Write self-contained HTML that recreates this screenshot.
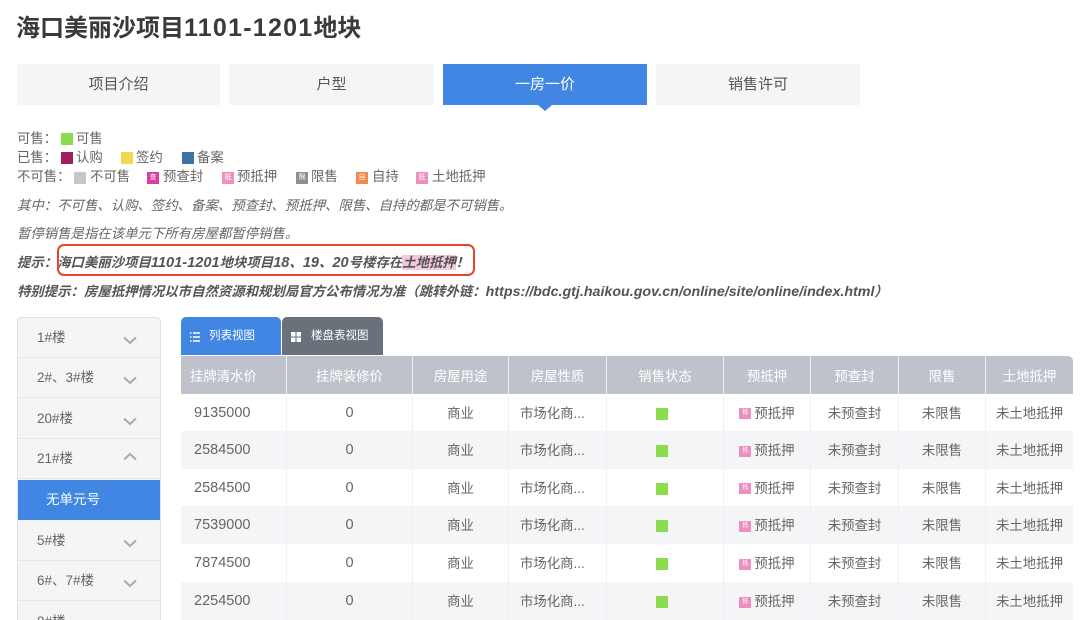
<!DOCTYPE html>
<html lang="zh-CN"><head><meta charset="utf-8"><title>海口美丽沙项目1101-1201地块</title>
<style>
*{box-sizing:border-box;margin:0;padding:0}
html,body{width:1080px;height:620px;overflow:hidden;background:#fff}
body{position:relative;font-family:"Liberation Sans","Noto Sans CJK SC",sans-serif;color:#555;font-size:13px}
h1{position:absolute;left:16px;top:12px;font-size:24px;line-height:32px;font-weight:700;color:#3a3a3a;white-space:nowrap}
h1 span{font-size:25px;letter-spacing:1.25px}
.tab{position:absolute;top:64px;height:41px;background:#f4f5f7;color:#555;font-size:15px;line-height:41px;text-align:center}
.tab.on{background:#4086e2;color:#fff}
.arrow{position:absolute;left:538px;top:105px;border-left:7px solid transparent;border-right:7px solid transparent;border-top:6px solid #4086e2;width:0;height:0}
.l{position:absolute;height:19px;line-height:19px;font-size:13.4px;color:#666;white-space:nowrap}
.s{position:absolute;width:12px;height:12px;color:#fff;font-size:7px;line-height:12px;text-align:center;overflow:hidden}
.i{position:absolute;left:17px;font-style:italic;font-size:13.4px;line-height:20px;color:#666;white-space:nowrap}
.i.k{font-weight:700;color:#555}
.i u{text-decoration:none;font-size:14.6px}
.i em{font-size:14.25px}
.mark{background:#f3c9dd}
.box{position:absolute;left:57px;top:244px;width:418px;height:32px;border:2.5px solid #e8432b;border-radius:7px}
.side{position:absolute;left:17px;top:317px;width:144px;height:320px;border:1px solid #dfe1e6;border-radius:4px 4px 0 0;background:#f4f5f7;overflow:hidden}
.it{position:absolute;left:0;width:142px;height:40px;line-height:40px;padding-left:19px;font-size:13.5px;color:#666;border-bottom:1.5px solid #e6e7eb}
.it svg{position:absolute;left:105px;top:18px}
.it.act{background:#4086e2;color:#fff;padding-left:28px;border:0;line-height:40px}
.vt{position:absolute;top:317px;height:38px;border-radius:5px 5px 0 0;color:#fff;font-size:11.5px;line-height:39px}
.vt svg{position:absolute;left:9px;top:15px}
.vt span{position:absolute;white-space:nowrap}
.tbl{position:absolute;left:181px;top:356px;width:892px;height:264px;background:#fff;overflow:hidden;border-radius:0 5px 0 0}
.r{position:absolute;left:0;width:892px}
.c{position:absolute;top:0;height:100%;text-align:center;font-size:13.4px;color:#666;display:flex;align-items:center;justify-content:center;white-space:nowrap;border-right:1.5px solid #eef0f3;padding-bottom:2px}
.r .n{left:0;width:106px;justify-content:flex-start;padding:0 0 0 13px;font-size:14.5px}
.r .z{left:106px;width:126px;font-size:14.5px;padding-bottom:0}
.r .m{left:328px;width:98px;justify-content:flex-start;padding-left:11px}
.h .c{color:#fff;background:#bfc2ca;border-right:1.5px solid #eceef1;padding-bottom:0}
.h .f{left:0;width:106px;justify-content:flex-start;padding-left:9px}
.g{width:12px;height:12px;background:#8ddc4d;display:block;transform:translate(-3px,2px)}
.p{display:inline-block;width:12px;height:11px;background:#ef8fc0;margin-right:3px;position:relative;top:2px;color:#fff;font-size:6px;line-height:11px;text-align:center;font-style:normal;overflow:hidden}
</style></head><body>
<h1>海口美丽沙项目<span>1101-1201</span>地块</h1>
<div class="tab" style="left:17px;width:203px">项目介绍</div>
<div class="tab" style="left:229px;width:205px">户型</div>
<div class="tab on" style="left:443px;width:204px">一房一价</div>
<div class="tab" style="left:656px;width:204px">销售许可</div>
<div class="arrow"></div>

<div class="l" style="left:17px;top:129px">可售：</div><div class="s" style="left:61px;top:133px;background:#8ddc4d"></div><div class="l" style="left:76px;top:129px">可售</div>
<div class="l" style="left:17px;top:148px">已售：</div><div class="s" style="left:61px;top:152px;background:#a01f5e"></div><div class="l" style="left:76px;top:148px">认购</div>
<div class="s" style="left:121px;top:152px;background:#efd94e"></div><div class="l" style="left:136px;top:148px">签约</div>
<div class="s" style="left:182px;top:152px;background:#3e74a3"></div><div class="l" style="left:197px;top:148px">备案</div>
<div class="l" style="left:17px;top:167px">不可售：</div><div class="s" style="left:74px;top:172px;background:#c6c6c6"></div><div class="l" style="left:90px;top:167px">不可售</div>
<div class="s" style="left:147px;top:172px;background:#dc3c9f">查</div><div class="l" style="left:163px;top:167px">预查封</div>
<div class="s" style="left:222px;top:172px;background:#ef8fc0">抵</div><div class="l" style="left:237px;top:167px">预抵押</div>
<div class="s" style="left:296px;top:172px;background:#8f8f8f">限</div><div class="l" style="left:311px;top:167px">限售</div>
<div class="s" style="left:356px;top:172px;background:#f28a4d">自</div><div class="l" style="left:372px;top:167px">自持</div>
<div class="s" style="left:416px;top:172px;background:#ef8fc0">抵</div><div class="l" style="left:432px;top:167px">土地抵押</div>

<div class="i" style="top:196px">其中：不可售、认购、签约、备案、预查封、预抵押、限售、自持的都是不可销售。</div>
<div class="i" style="top:224px">暂停销售是指在该单元下所有房屋都暂停销售。</div>
<div class="i k" style="top:253px">提示：海口美丽沙项目<u>1101-1201</u>地块项目<u>18</u>、<u>19</u>、<u>20</u>号楼存在<span class="mark">土地抵押</span>！</div>
<div class="box"></div>
<div class="i k" style="top:282px">特别提示：房屋抵押情况以市自然资源和规划局官方公布情况为准（跳转外链：<em>https://bdc.gtj.haikou.gov.cn/online/site/online/index.html</em>）</div>

<div class="side">
<div class="it" style="top:0">1#楼<svg width="14" height="9" viewBox="0 0 14 9"><path d="M1 1.5L7 7L13 1.5" fill="none" stroke="#aaa" stroke-width="2"/></svg></div>
<div class="it" style="top:40px">2#、3#楼<svg width="14" height="9" viewBox="0 0 14 9"><path d="M1 1.5L7 7L13 1.5" fill="none" stroke="#aaa" stroke-width="2"/></svg></div>
<div class="it" style="top:81px">20#楼<svg width="14" height="9" viewBox="0 0 14 9"><path d="M1 1.5L7 7L13 1.5" fill="none" stroke="#aaa" stroke-width="2"/></svg></div>
<div class="it" style="top:121px">21#楼<svg style="top:13px" width="14" height="9" viewBox="0 0 14 9"><path d="M1 7.5L7 2L13 7.5" fill="none" stroke="#aaa" stroke-width="2"/></svg></div>
<div class="it act" style="top:162px">无单元号</div>
<div class="it" style="top:203px">5#楼<svg width="14" height="9" viewBox="0 0 14 9"><path d="M1 1.5L7 7L13 1.5" fill="none" stroke="#aaa" stroke-width="2"/></svg></div>
<div class="it" style="top:243px">6#、7#楼<svg width="14" height="9" viewBox="0 0 14 9"><path d="M1 1.5L7 7L13 1.5" fill="none" stroke="#aaa" stroke-width="2"/></svg></div>
<div class="it" style="top:284px">8#楼<svg width="14" height="9" viewBox="0 0 14 9"><path d="M1 1.5L7 7L13 1.5" fill="none" stroke="#aaa" stroke-width="2"/></svg></div>
</div>

<div class="vt" style="left:181px;width:100px;background:#4086e2"><svg width="10" height="10" viewBox="0 0 10 10"><path d="M0 1H1.5M3 1H10M0 5H1.5M3 5H10M0 9H1.5M3 9H10" stroke="#fff" stroke-width="1.6" fill="none"/></svg><span style="left:28px">列表视图</span></div>
<div class="vt" style="left:282px;width:101px;background:#69717b"><svg width="10" height="10" viewBox="0 0 10 10"><path d="M0 0H4.5V4.5H0ZM5.5 0H10V4.5H5.5ZM0 5.5H4.5V10H0ZM5.5 5.5H10V10H5.5Z" fill="#fff"/></svg><span style="left:29px">楼盘表视图</span></div>

<div class="tbl">
<div class="r h" style="top:0;height:38px">
<div class="c f">挂牌清水价</div><div class="c" style="left:106px;width:126px">挂牌装修价</div><div class="c" style="left:232px;width:96px">房屋用途</div><div class="c" style="left:328px;width:98px">房屋性质</div><div class="c" style="left:426px;width:117px">销售状态</div><div class="c" style="left:543px;width:87px">预抵押</div><div class="c" style="left:630px;width:88px">预查封</div><div class="c" style="left:718px;width:87px">限售</div><div class="c" style="left:805px;width:87px;border-right:0">土地抵押</div>
</div>
<div class="r" style="top:38px;height:37px;background:#fff">
<div class="c n">9135000</div><div class="c z">0</div><div class="c" style="left:232px;width:96px">商业</div><div class="c m">市场化商...</div><div class="c" style="left:426px;width:117px"><i class="g"></i></div><div class="c" style="left:543px;width:87px"><i class="p">抵</i>预抵押</div><div class="c" style="left:630px;width:88px">未预查封</div><div class="c" style="left:718px;width:87px">未限售</div><div class="c" style="left:805px;width:87px;border-right:0">未土地抵押</div>
</div>
<div class="r" style="top:75px;height:38px;background:#f4f5f7">
<div class="c n">2584500</div><div class="c z">0</div><div class="c" style="left:232px;width:96px">商业</div><div class="c m">市场化商...</div><div class="c" style="left:426px;width:117px"><i class="g"></i></div><div class="c" style="left:543px;width:87px"><i class="p">抵</i>预抵押</div><div class="c" style="left:630px;width:88px">未预查封</div><div class="c" style="left:718px;width:87px">未限售</div><div class="c" style="left:805px;width:87px;border-right:0">未土地抵押</div>
</div>
<div class="r" style="top:113px;height:37px;background:#fff">
<div class="c n">2584500</div><div class="c z">0</div><div class="c" style="left:232px;width:96px">商业</div><div class="c m">市场化商...</div><div class="c" style="left:426px;width:117px"><i class="g"></i></div><div class="c" style="left:543px;width:87px"><i class="p">抵</i>预抵押</div><div class="c" style="left:630px;width:88px">未预查封</div><div class="c" style="left:718px;width:87px">未限售</div><div class="c" style="left:805px;width:87px;border-right:0">未土地抵押</div>
</div>
<div class="r" style="top:150px;height:38px;background:#f4f5f7">
<div class="c n">7539000</div><div class="c z">0</div><div class="c" style="left:232px;width:96px">商业</div><div class="c m">市场化商...</div><div class="c" style="left:426px;width:117px"><i class="g"></i></div><div class="c" style="left:543px;width:87px"><i class="p">抵</i>预抵押</div><div class="c" style="left:630px;width:88px">未预查封</div><div class="c" style="left:718px;width:87px">未限售</div><div class="c" style="left:805px;width:87px;border-right:0">未土地抵押</div>
</div>
<div class="r" style="top:188px;height:38px;background:#fff">
<div class="c n">7874500</div><div class="c z">0</div><div class="c" style="left:232px;width:96px">商业</div><div class="c m">市场化商...</div><div class="c" style="left:426px;width:117px"><i class="g"></i></div><div class="c" style="left:543px;width:87px"><i class="p">抵</i>预抵押</div><div class="c" style="left:630px;width:88px">未预查封</div><div class="c" style="left:718px;width:87px">未限售</div><div class="c" style="left:805px;width:87px;border-right:0">未土地抵押</div>
</div>
<div class="r" style="top:226px;height:38px;background:#f4f5f7">
<div class="c n">2254500</div><div class="c z">0</div><div class="c" style="left:232px;width:96px">商业</div><div class="c m">市场化商...</div><div class="c" style="left:426px;width:117px"><i class="g"></i></div><div class="c" style="left:543px;width:87px"><i class="p">抵</i>预抵押</div><div class="c" style="left:630px;width:88px">未预查封</div><div class="c" style="left:718px;width:87px">未限售</div><div class="c" style="left:805px;width:87px;border-right:0">未土地抵押</div>
</div>
</div>
</body></html>
